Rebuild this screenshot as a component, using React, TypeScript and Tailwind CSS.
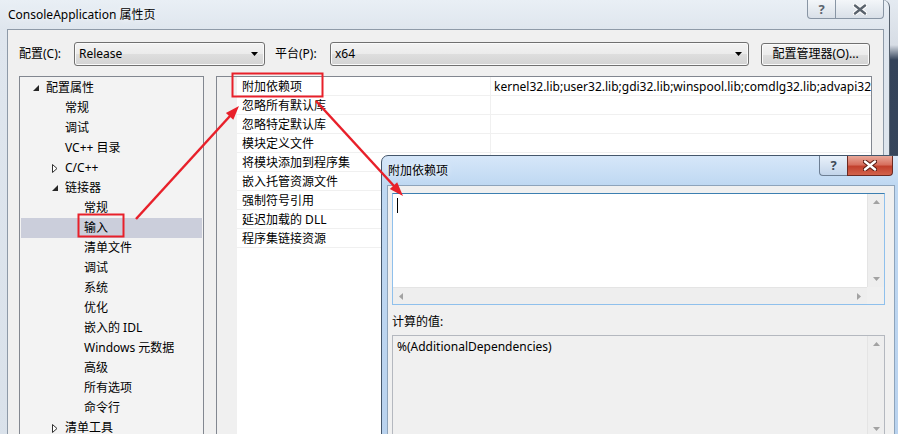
import type { ReactNode } from "react";

type TreeItem = {
  label: string;
  level: 0 | 1 | 2;
  toggle?: "open" | "closed";
  selected?: boolean;
};

const treeItems: TreeItem[] = [
  { label: "配置属性", level: 0, toggle: "open" },
  { label: "常规", level: 1 },
  { label: "调试", level: 1 },
  { label: "VC++ 目录", level: 1 },
  { label: "C/C++", level: 1, toggle: "closed" },
  { label: "链接器", level: 1, toggle: "open" },
  { label: "常规", level: 2 },
  { label: "输入", level: 2, selected: true },
  { label: "清单文件", level: 2 },
  { label: "调试", level: 2 },
  { label: "系统", level: 2 },
  { label: "优化", level: 2 },
  { label: "嵌入的 IDL", level: 2 },
  { label: "Windows 元数据", level: 2 },
  { label: "高级", level: 2 },
  { label: "所有选项", level: 2 },
  { label: "命令行", level: 2 },
  { label: "清单工具", level: 1, toggle: "closed" },
];

const indent = ["pl-[12px]", "pl-[31px]", "pl-[50px]"];

const properties: { name: string; value?: string }[] = [
  {
    name: "附加依赖项",
    value:
      "kernel32.lib;user32.lib;gdi32.lib;winspool.lib;comdlg32.lib;advapi32.lib;shell32.lib;ole32.lib;oleaut32.lib;uuid.lib",
  },
  { name: "忽略所有默认库" },
  { name: "忽略特定默认库" },
  { name: "模块定义文件" },
  { name: "将模块添加到程序集" },
  { name: "嵌入托管资源文件" },
  { name: "强制符号引用" },
  { name: "延迟加载的 DLL" },
  { name: "程序集链接资源" },
];

export default function App() {
  return (
    <div className="relative h-[434px] w-[898px] overflow-hidden bg-[linear-gradient(180deg,#e4eaf1_0px,#d7dde5_45px,#34435a_60px,#3a4a60_100%)] font-['Noto_Sans','Noto_Sans_CJK_SC',sans-serif] text-[12px] text-black">
      <MainWindow />
      <DependencyDialog />
      <Annotations />
    </div>
  );
}

function MainWindow() {
  return (
    <div className="absolute left-0 top-0 h-[480px] w-[890px] rounded-tr-[7px] border-r border-[#56616e] bg-[linear-gradient(180deg,#e9eff5_0px,#dfe6ee_29px,#d9e1ea_100%)]">
      <div className="flex h-[29px] items-center pl-[8px] pt-[1px]">
        <span className="leading-none [text-shadow:0_0_6px_#ffffff]">ConsoleApplication 属性页</span>
      </div>

      <div className="absolute left-[807px] top-0 flex h-[19px] overflow-hidden rounded-b-[4px] border border-t-0 border-[#8895a4] bg-[linear-gradient(180deg,#f3f6f9,#d9e0e8)]">
        <div className="flex w-[28px] items-center justify-center border-r border-[#8895a4] text-[13px] font-bold leading-none text-[#5a636d]">
          ?
        </div>
        <div className="flex w-[47px] items-center justify-center">
          <CloseGlyph color="#5a636d" />
        </div>
      </div>

      <div className="ml-[7px] h-[460px] w-[877px] border border-[#8e9aa8] bg-[#f0f0f0] pl-[11px] pt-[12px]">
        <div className="flex h-[24px] items-center">
          <span className="w-[55px]">配置(C):</span>
          <Combo value="Release" className="w-[191px]" />
          <span className="ml-[10px] w-[55px]">平台(P):</span>
          <Combo value="x64" className="w-[419px]" />
          <button className="ml-[12px] h-[23px] w-[109px] rounded-[3px] border border-[#707070] bg-[linear-gradient(180deg,#f4f4f4_0%,#ececec_50%,#dfdfdf_50%,#d2d2d2_100%)] text-[12px] shadow-[inset_0_0_0_1px_#fbfbfb]">
            配置管理器(O)...
          </button>
        </div>

        <div className="mt-[10px] flex gap-[12px]">
          <Tree />
          <PropertyGrid />
        </div>
      </div>
    </div>
  );
}

function Combo({ value, className }: { value: string; className: string }) {
  return (
    <div
      className={`flex h-[24px] items-center justify-between rounded-[3px] border border-[#707070] bg-[linear-gradient(180deg,#f3f3f3_0%,#ebebeb_50%,#dedede_50%,#d3d3d3_100%)] pl-[4px] pr-[6px] shadow-[inset_0_0_0_1px_#fafafa] ${className}`}
    >
      <span>{value}</span>
      <svg width="7" height="4" viewBox="0 0 7 4">
        <path d="M0 0h7L3.5 4z" fill="#000" />
      </svg>
    </div>
  );
}

function Tree() {
  return (
    <div className="h-[400px] w-[185px] border border-[#828790] bg-[#f3f3f3] pt-[1px]">
      {treeItems.map((item, i) => (
        <div
          key={i}
          className={`mx-[1px] flex h-[20px] items-center ${indent[item.level]} ${item.selected ? "bg-[#cbcedb]" : ""}`}
        >
          <span className="flex w-[13px] items-center">
            {item.toggle === "open" && (
              <svg width="6" height="6" viewBox="0 0 6 6">
                <path d="M6 0v6H0z" fill="#262626" />
              </svg>
            )}
            {item.toggle === "closed" && (
              <svg width="6" height="9" viewBox="0 0 6 9">
                <path d="M0.5 0.5L5 4.5L0.5 8.5z" fill="#fff" stroke="#303030" />
              </svg>
            )}
          </span>
          <span>{item.label}</span>
        </div>
      ))}
    </div>
  );
}

function PropertyGrid() {
  return (
    <div className="flex h-[400px] w-[656px] border border-[#828790] bg-white">
      <div className="w-[20px] bg-[#f0f0f0]" />
      <div className="min-w-0 flex-1">
        {properties.map((p, i) => (
          <div key={i} className="flex h-[19px] border-b border-[#f0f0f0] pt-[2px]">
            <div className="flex w-[253px] items-center pl-[5px]">{p.name}</div>
            <div className="-mt-[2px] flex min-w-0 flex-1 items-center overflow-hidden whitespace-nowrap border-l border-[#f0f0f0] pl-[3px] pt-[2px]">
              {p.value}
            </div>
          </div>
        ))}
      </div>
    </div>
  );
}

function DependencyDialog() {
  return (
    <div className="absolute left-[381px] top-[155px] h-[300px] w-[530px] rounded-t-[7px] border border-[#45576c] bg-[linear-gradient(180deg,#d6e7f9_0px,#bfd8f2_29px,#b9d2ee_100%)]">
      <div className="flex h-[29px] items-center pl-[6px] pt-[1px]">
        <span className="leading-none [text-shadow:0_0_6px_#ffffff]">附加依赖项</span>
      </div>

      <div className="absolute left-[437px] top-0 flex h-[20px]">
        <div className="flex w-[28px] items-center justify-center rounded-bl-[4px] border border-t-0 border-r-0 border-[#6d7f94] bg-[linear-gradient(180deg,#e9f1fa,#c3d5ea)] text-[13px] font-bold leading-none text-[#3f4a57]">
          ?
        </div>
        <div className="flex w-[46px] items-center justify-center rounded-br-[4px] border border-t-0 border-[#6b2a22] bg-[linear-gradient(180deg,#e9a899_0%,#d7705f_45%,#c2412d_55%,#d2634b_100%)]">
          <CloseGlyph color="#ffffff" outline="#5b1d14" />
        </div>
      </div>

      <div className="ml-[5px] h-[270px] w-[508px] border border-[#8ea4bb] bg-[#f0f0f0] pl-[4px] pt-[7px]">
        <div className="grid h-[112px] w-[493px] grid-cols-[1fr_17px] grid-rows-[1fr_17px] border border-[#8fc0ec] border-t-[#3c7fb1] bg-white">
          <div className="p-[4px]">
            <div className="h-[15px] w-[1px] bg-black" />
          </div>
          <VScroll />
          <HScroll />
          <div className="bg-[#f0f0f0]" />
        </div>

        <div className="mt-[8px] h-[18px] leading-[18px]">计算的值:</div>

        <div className="mt-[4px] grid h-[120px] w-[493px] grid-cols-[1fr_17px] grid-rows-[1fr_17px] border border-[#b4b8bf] bg-[#f0f0f0]">
          <div className="pl-[4px] pt-[3px] leading-[16px]">%(AdditionalDependencies)</div>
          <VScroll />
          <HScroll />
          <div className="bg-[#f0f0f0]" />
        </div>
      </div>
    </div>
  );
}

function VScroll() {
  return (
    <div className="flex flex-col items-center justify-between border-l border-[#e4e4e4] bg-[#eeeeee] py-[6px]">
      <Tri d="M0 4L3.5 0L7 4z" w={7} h={4} />
      <Tri d="M0 0H7L3.5 4z" w={7} h={4} />
    </div>
  );
}

function HScroll() {
  return (
    <div className="flex items-center justify-between border-t border-[#e4e4e4] bg-[#eeeeee] px-[6px]">
      <Tri d="M4 0V7L0 3.5z" w={4} h={7} />
      <Tri d="M0 0V7L4 3.5z" w={4} h={7} />
    </div>
  );
}

function Tri({ d, w, h }: { d: string; w: number; h: number }) {
  return (
    <svg width={w} height={h} viewBox={`0 0 ${w} ${h}`}>
      <path d={d} fill="#a2a2a2" />
    </svg>
  );
}

function CloseGlyph({ color, outline = "#ffffff" }: { color: string; outline?: string }): ReactNode {
  return (
    <svg width="14" height="11" viewBox="0 0 14 11">
      <path d="M2 1.5L12 9.5M12 1.5L2 9.5" stroke={outline} strokeWidth="4.5" strokeLinecap="round" />
      <path d="M2 1.5L12 9.5M12 1.5L2 9.5" stroke={color} strokeWidth="2.4" strokeLinecap="round" />
    </svg>
  );
}

function Annotations() {
  return (
    <svg className="pointer-events-none absolute inset-0" width="898" height="434" viewBox="0 0 898 434">
      <rect x="232.5" y="73.5" width="90" height="23" fill="none" stroke="#e8202a" strokeWidth="2" />
      <rect x="78.5" y="214.5" width="45" height="22" fill="none" stroke="#e8202a" strokeWidth="2" />

      <line x1="136" y1="219" x2="230" y2="116" stroke="#e8202a" strokeWidth="2.5" />
      <path d="M239 106L233.3 119.7L225.9 112.9z" fill="#e8202a" />

      <line x1="316" y1="101" x2="394" y2="186" stroke="#e8202a" strokeWidth="2.5" />
      <path d="M403 196L389.8 189.1L397.2 182.3z" fill="#e8202a" />
    </svg>
  );
}
